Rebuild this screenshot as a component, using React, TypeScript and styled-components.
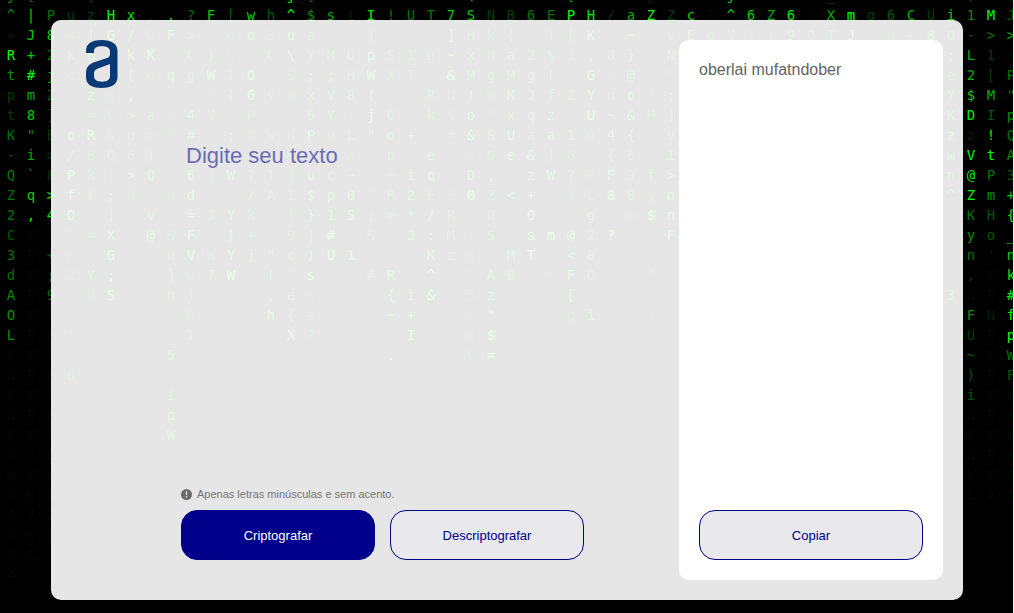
import React from "react";
import styled, { createGlobalStyle } from "styled-components";

const GlobalStyle = createGlobalStyle`
  *, *::before, *::after { box-sizing: border-box; }
  body {
    margin: 0;
    background: #ececec;
    font-family: "Liberation Sans", Arial, sans-serif;
  }
`;

/*
 * Falling code, one string per line. Each token is a glyph followed by its
 * brightness (0-9); a token of three characters, such as "x13", skips cells.
 */
const RAIN_ROWS: string[] = [
  `j5 [4 x02 [2 x09 j9 [4 x06 x01 (7 x04 [5 x03 j1 x03 j7 x04 _3 x06 ;3 x01 (2 x01`,
  `^5 |7 P4 u2 z2 H9 x8 .1 .7 ?4 F7 [3 w7 h3 ^9 $5 s6 i1 I8 !4 U4 T4 77 S7 N2 B2 64 E4 P9 H8 /2 a6 Z9 Z2 c7 x01 ^7 67 Z6 68 x01 X6 m9 q2 63 C6 U2 i7 15 M9 J3`,
  `+1 J7 87 <3 !5 G8 /6 G2 F7 >3 x01 o2 o6 32 u8 a4 x02 ]3 x03 ]7 H4 k3 {4 _3 )4 [3 K7 x01 ~5 x01 v4 E6 o6 V3 12 !2 96 O3 T5 J7 x01 h2 -5 87 O5 -3 >4 >6`,
  `R9 +7 24 k4 B6 x01 k7 K9 x01 C3 )5 u2 x01 C3 \\7 Y4 M4 U4 p7 S3 13 g3 ~7 x5 N2 a5 24 %5 12 ,7 04 }5 x01 N4 x13 ;6 L6 12 x01`,
  `t5 #9 j6 c3 x02 (7 d2 q7 g4 W7 I3 O7 x01 S2 ;5 ;5 H4 W7 X3 T3 x01 &9 M5 g4 M5 g5 (6 x01 G8 o1 @6 x01 '3 x13 e4 26 [2 P4`,
  `p2 m6 Z3 x01 z7 g2 ,9 x03 "2 {4 67 y3 62 x5 V5 85 (7 x02 R4 U3 !6 %3 K6 J4 f5 Z3 Y8 n4 o6 ?1 ;5 x13 Y5 $7 M6 "4`,
  `t2 87 ]3 x01 =3 C2 >4 a5 S1 46 V3 x01 P3 x02 65 Y5 *3 j9 G4 x01 k5 %3 o7 "2 x6 q5 z5 x01 U9 ~5 &7 H4 ]4 x13 K6 D8 I3 p5`,
  `K4 "5 E2 o7 R9 K3 u4 >3 M1 #6 x01 ;5 r3 w3 H3 P7 u2 L5 "8 o4 +5 x01 #3 &8 S3 U7 a3 a6 14 Q2 47 {6 x01 v4 x13 z5 z1 !8 Q4`,
  `-3 i6 >2 /6 B3 Q4 64 )5 ]1 x05 S2 x02 A2 -2 n5 x01 e6 x01 a1 D4 e7 &7 ]3 G3 x01 {5 63 ~1 I6 x13 w6 V9 t9 A5`,
  `Q4 \`5 82 P8 k4 (4 >6 Q5 x01 67 [3 W7 74 13 [3 u6 c5 ~6 x01 ~4 i5 q6 x01 D7 ,4 x01 z6 W7 ?4 R2 F7 33 f6 >7 x13 n6 @8 P4 33`,
  `Z4 q7 >8 f7 (4 ;5 82 x01 h2 d7 x02 /4 A4 14 $7 p7 07 ^2 R4 26 E2 E1 09 Z4 <7 +7 x01 72 L3 88 04 y3 n7 x13 ^7 Z9 m5 +7`,
  `24 ,8 48 O8 x01 ]4 x01 v5 ;2 =7 J3 Y7 k4 x01 !3 }7 17 S7 ;3 >4 *5 /6 R3 x01 03 x01 O7 x02 g4 x01 o2 $8 n8 x14 K4 H3 {8`,
  `C3 x02 ^3 =4 X7 x01 @7 &3 F8 x01 )7 +4 x01 94 |6 #8 x01 &4 x01 35 :7 M4 f2 S5 x01 s8 m9 @6 24 ?9 x02 F8 x14 y5 o3 _8`,
  `34 x01 +3 n2 x01 G8 x02 u3 V9 W4 Y8 ]5 "5 c3 )7 U8 18 x02 .1 K7 z4 g2 x01 M4 T9 x01 <7 84 x18 n4 '1 n7`,
  `d4 x01 ;4 Z2 Y5 ;9 x02 ]4 U2 74 W9 x01 (6 \`4 s9 x02 #4 R7 x01 ^9 ^1 ^2 A5 B4 x01 *2 F7 O4 x02 ^3 x15 ,2 x01 k8`,
  `A5 x01 94 x01 U2 S9 x02 h3 j3 x03 ,6 e5 s2 x03 {7 i6 &9 x01 52 z6 x03 [8 x18 35 x02 #8`,
  `O5 x08 R2 x03 h8 {5 a2 x03 ~7 +7 x02 +1 "7 x02 %1 g2 i6 x02 ;2 x15 F5 N1 f9`,
  `L5 x02 '3 x05 I3 x04 X8 ?3 x04 I8 x02 a2 $8 x23 U2 x01 p9`,
  `x08 55 x10 .8 x03 C2 =9 x23 ~3 x01 W4`,
  `x03 u4 x44 )3 x01 F3`,
  `x08 i5 x39 i3 x02`,
  `x08 p6 x42`,
  `x08 W6 x42`,
  `90 Y0 E0 x48`,
  `W0 X0 s0 u0 x0 k0 h0 60 U0 m0 x38 b0 80 60`,
  `N0 p0 V0 x45 L0 A0 X0`,
  `A0 70 I0 N0`,
  `N0 $0 20`,
  `90 C0`,
  `40`,
];

const COLUMNS = 51;
const GREENS = [10, 32, 60, 88, 114, 142, 172, 205, 232, 252];

type Cell = { glyph: string; level: number };

function parseRow(row: string, index: number): Cell[] {
  const cells: Cell[] = [];
  const faded = index > 0 && index < 24 ? "8" : "";
  row.split(" ").forEach((token) => {
    if (token.length === 3) {
      for (let n = Number(token.slice(1)); n > 0; n -= 1) {
        cells.push({ glyph: faded, level: 0 });
      }
    } else {
      cells.push({ glyph: token[0], level: Number(token[1]) });
    }
  });
  while (cells.length < COLUMNS) cells.push({ glyph: "", level: 0 });
  return cells.slice(0, COLUMNS);
}

const Page = styled.div`
  position: relative;
  display: flex;
  min-height: 100vh;
  margin-right: 1px;
  padding: 20px 50px 13px 51px;
  background: #000;
`;

const Rain = styled.div`
  position: absolute;
  inset: 0;
  overflow: hidden;
  font: 14px/20px "DejaVu Sans Mono", monospace;
`;

const RainGrid = styled.div`
  display: grid;
  grid-template-columns: repeat(${COLUMNS}, 20px);
  grid-auto-rows: 20px;
  margin-top: -15px;
  padding-left: 1px;
`;

const Glyph = styled.span<{ $level: number }>`
  text-align: center;
  color: rgb(0, ${({ $level }) => GREENS[$level]}, 0);
`;

const Panel = styled.main`
  position: relative;
  display: flex;
  flex: 1;
  padding: 20px;
  border-radius: 10px;
  background: rgba(255, 255, 255, 0.9);
`;

const Brand = styled.header`
  flex: 0 0 110px;
  padding-left: 15px;

  svg { display: block; }
`;

const Editor = styled.form`
  display: flex;
  flex: 1;
  flex-direction: column;
  min-width: 0;
  margin-right: 95px;
  padding: 98px 0 20px;
`;

const TextInput = styled.textarea`
  flex: 1;
  width: 100%;
  padding: 5px;
  border: 0;
  outline: 0;
  resize: none;
  background: transparent;
  color: #00008b;
  font: 22px/25px "Liberation Sans", Arial, sans-serif;

  &::placeholder {
    color: #00008b;
    opacity: 0.54;
  }
`;

const Note = styled.p`
  display: flex;
  align-items: center;
  gap: 5px;
  margin: 0 0 10px;
  color: #757575;
  font-size: 11px;
  line-height: 12px;
`;

const Actions = styled.div`
  display: flex;
  gap: 15px;
`;

const Button = styled.button<{ $primary?: boolean }>`
  flex: 1;
  height: 50px;
  padding: 0;
  border: 1px solid #00008b;
  border-radius: 16px;
  background: ${({ $primary }) => ($primary ? "#00008b" : "#e8e8ed")};
  color: ${({ $primary }) => ($primary ? "#fff" : "#00008b")};
  font: 13px "Liberation Sans", Arial, sans-serif;
  cursor: pointer;
`;

const Result = styled.aside`
  display: flex;
  flex: 0 1 264px;
  flex-direction: column;
  justify-content: space-between;
  padding: 20px;
  border-radius: 10px;
  background: #fff;
`;

const ResultText = styled.p`
  margin: 0;
  color: #636363;
  font-size: 16px;
  line-height: 20px;
`;

const ResultActions = styled.div`
  display: flex;
`;

function Logo() {
  return (
    <svg width="32" height="48" viewBox="0 0 32 48" role="img" aria-label="Alura">
      <path
        fill="#0a3a75"
        fillRule="evenodd"
        d="M0 13V11C0 4 5 0 15.500 0C26 0 31.500 4 31.500 11V37C31.500 44 26 48 15.500 48C5 48 0 44 0 37V33C0 27 3 24 9 22L21 18C23 17.300 24 16.300 24 14V11.500C24 8 21 6.300 15.800 6.300C10.500 6.300 8 8 8 11.500V13ZM24 24L12 28.500C9 29.600 8 31 8 34V36C8 40 11 41.700 16 41.700C21 41.700 24 40 24 36Z"
      />
    </svg>
  );
}

function AlertIcon() {
  return (
    <svg width="11" height="11" viewBox="0 0 11 11" aria-hidden="true">
      <circle cx="5.500" cy="5.500" r="5.500" fill="#6b6b6b" />
      <path d="M4.800 2.300H6.200L6 6.300H5Z" fill="#e5e5e5" />
      <circle cx="5.500" cy="7.900" r="0.800" fill="#e5e5e5" />
    </svg>
  );
}

export default function App() {
  return (
    <>
      <GlobalStyle />
      <Page>
        <Rain aria-hidden="true">
          <RainGrid>
            {RAIN_ROWS.map((row, r) =>
              parseRow(row, r).map((cell, c) => (
                <Glyph key={`${r}-${c}`} $level={cell.level}>
                  {cell.glyph}
                </Glyph>
              ))
            )}
          </RainGrid>
        </Rain>
        <Panel>
          <Brand>
            <Logo />
          </Brand>
          <Editor onSubmit={(event) => event.preventDefault()}>
            <TextInput aria-label="Digite seu texto" placeholder="Digite seu texto" />
            <Note>
              <AlertIcon />
              Apenas letras minúsculas e sem acento.
            </Note>
            <Actions>
              <Button type="submit" $primary>
                Criptografar
              </Button>
              <Button type="button">Descriptografar</Button>
            </Actions>
          </Editor>
          <Result>
            <ResultText>oberlai mufatndober</ResultText>
            <ResultActions>
              <Button type="button">Copiar</Button>
            </ResultActions>
          </Result>
        </Panel>
      </Page>
    </>
  );
}
